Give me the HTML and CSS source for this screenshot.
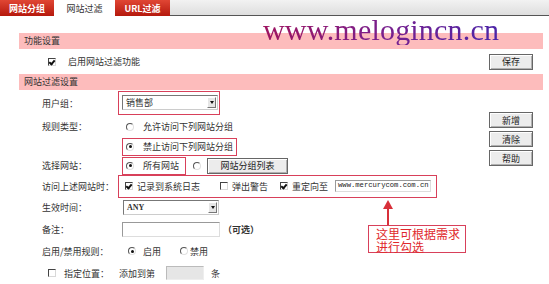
FILE: index.html
```html
<!DOCTYPE html>
<html lang="zh-CN">
<head>
  <meta charset="UTF-8">
  <title>网站过滤</title>
  <link rel="stylesheet" href="styles.css">
</head>
<body>

  <div class="tabs">
    <span class="tab">网站分组</span>
    <span class="tab active">网站过滤</span>
    <span class="tab">URL过滤</span>
    <span class="tab-fill"></span>
  </div>

  <div class="watermark">www.melogincn.cn</div>

  <div class="page">
    <div class="bar">功能设置</div>
    <div class="enable-row">
      <span class="cb checked"></span>
      <span class="enable-label">启用网站过滤功能</span>
      <button class="btn save">保存</button>
    </div>

    <div class="bar">网站过滤设置</div>
    <div class="section">
      <div class="form">
        <span class="lbl">用户组：</span>
        <div><span class="hl hl-select"><span class="select">销售部<i class="drop"></i></span></span></div>

        <span class="lbl">规则类型：</span>
        <div><span class="opt"><span class="rd"></span>允许访问下列网站分组</span></div>

        <span class="lbl"></span>
        <div><span class="opt hl"><span class="rd on"></span>禁止访问下列网站分组</span></div>

        <span class="lbl">选择网站：</span>
        <div class="line">
          <span class="opt hl opt-all"><span class="rd on"></span>所有网站</span>
          <span class="rd rd-list"></span>
          <button class="btn btn-list">网站分组列表</button>
        </div>

        <span class="lbl">访问上述网站时：</span>
        <div><span class="hl hl-wide">
          <span class="cb checked"></span><span class="cb-text">记录到系统日志</span>
          <span class="cb cb-warn"></span><span class="cb-text">弹出警告</span>
          <span class="cb checked cb-redir"></span><span class="cb-text">重定向至</span>
          <span class="input url">www.mercurycom.com.cn</span>
        </span></div>

        <span class="lbl">生效时间：</span>
        <div><span class="select select-time"><b>ANY</b><i class="drop"></i></span></div>

        <span class="lbl">备注：</span>
        <div class="line"><span class="input note"></span><span class="optional">（可选）</span></div>

        <span class="lbl">启用/禁用规则：</span>
        <div class="line state">
          <span class="rd on"></span><span class="on-text">启用</span>
          <span class="rd rd-off"></span><span>禁用</span>
        </div>

        <div class="line position">
          <span class="cb"></span>
          <span class="pos-label">指定位置：</span>
          <span>添加到第</span>
          <span class="input pos-num"></span>
          <span class="pos-unit">条</span>
        </div>
      </div>

      <div class="side">
        <button class="btn">新增</button>
        <button class="btn">清除</button>
        <button class="btn">帮助</button>
      </div>
    </div>
  </div>

  <div class="note-arrow"></div>
  <div class="note-box">这里可根据需求<br>进行勾选</div>

</body>
</html>
```

FILE: styles.css
```css
body {
  margin: 0;
  background: #fff;
  color: #333;
  font-family: "Noto Sans CJK SC", "Liberation Sans", sans-serif;
  font-size: 9px;
  line-height: 1;
  position: relative;
  width: 549px;
  height: 284px;
  overflow: hidden;
}

/* tabs */
.tabs {
  display: flex;
  height: 16px;
}
.tab {
  width: 54px;
  margin-right: 2px;
  display: flex;
  align-items: center;
  justify-content: center;
  background: linear-gradient(#e04634, #b5190d);
  color: #fff;
  font-weight: bold;
}
.tab.active {
  width: 57px;
  background: #fff;
  color: #333;
  font-weight: normal;
}
.tab:nth-child(3) {
  width: 55px;
  margin-right: 0;
}
.tab-fill {
  flex: 1;
  background: linear-gradient(#f2f2f2, #dedede);
  border-bottom: 1px solid #555;
  box-sizing: border-box;
}

.watermark {
  position: absolute;
  left: 263px;
  top: 15px;
  font-family: "Liberation Serif", serif;
  font-size: 30px;
  line-height: 30px;
  letter-spacing: 0.2px;
  background: linear-gradient(90deg, #9e1460, #7a1f8c 50%, #4c25a8);
  -webkit-background-clip: text;
  background-clip: text;
  color: transparent;
  z-index: 2;
}

.page {
  padding: 17px 6px 0 19px;
}
.bar {
  height: 16px;
  line-height: 16px;
  padding-left: 5px;
  background: #fdbcbc;
  color: #333;
}

.enable-row {
  height: 25px;
  display: flex;
  align-items: center;
  padding-left: 29px;
}
.enable-label {
  margin-left: 12px;
}
.save {
  margin-left: auto;
  margin-right: 10px;
}

/* controls */
.btn {
  width: 44px;
  height: 16px;
  padding: 0;
  background: #ececec;
  border: 1px solid #666;
  box-shadow: inset 1px 1px #fff, inset -1px -1px #b0b0b0;
  font-family: inherit;
  font-size: 9px;
  color: #222;
}
.cb {
  display: inline-block;
  width: 8px;
  height: 8px;
  box-sizing: border-box;
  border: 1px solid;
  border-color: #444 #d8d8d8 #d8d8d8 #444;
  background: #fff;
  position: relative;
  flex: none;
}
.cb.checked::after {
  content: "";
  position: absolute;
  left: 1px;
  top: 0;
  width: 2px;
  height: 4px;
  border: solid #111;
  border-width: 0 2px 2px 0;
  transform: rotate(40deg);
}
.rd {
  display: inline-block;
  width: 8px;
  height: 8px;
  box-sizing: border-box;
  border-radius: 50%;
  border: 1px solid;
  border-color: #555 #e0e0e0 #e0e0e0 #555;
  position: relative;
  flex: none;
}
.rd.on::after {
  content: "";
  position: absolute;
  left: 1.5px;
  top: 1.5px;
  width: 3px;
  height: 3px;
  border-radius: 50%;
  background: #111;
}
.select {
  display: inline-flex;
  align-items: center;
  width: 96px;
  height: 15px;
  box-sizing: border-box;
  border: 1px solid;
  border-color: #777 #ccc #ccc #777;
  padding-left: 3px;
  background: #fff;
  position: relative;
}
.select b {
  font-family: "Liberation Serif", serif;
  font-size: 8px;
}
.drop {
  position: absolute;
  right: 1px;
  top: 1px;
  width: 9px;
  height: 11px;
  box-sizing: border-box;
  background: #e6e6e6;
  border: 1px solid;
  border-color: #fff #777 #777 #fff;
}
.drop::after {
  content: "";
  position: absolute;
  left: 1.5px;
  top: 3px;
  border: 2.5px solid transparent;
  border-top: 3px solid #111;
  border-bottom: 0;
}
.input {
  display: inline-flex;
  align-items: center;
  box-sizing: border-box;
  height: 15px;
  border: 1px solid;
  border-color: #999 #ddd #ddd #999;
  background: #fff;
}

/* highlight annotations */
.hl {
  outline: 1px solid #d8405a;
}

/* filter section */
.section {
  display: flex;
}
.form {
  flex: 1;
  display: grid;
  grid-template-columns: 80px 1fr;
  grid-template-rows: 26px 21px 19px 19px 22px 21px 22px 22px 22px;
  align-items: center;
  padding-left: 23px;
}
.line {
  display: flex;
  align-items: center;
}
.hl-select {
  display: inline-flex;
  margin-left: -3px;
  padding: 3px 1px 4px 3px;
}
.opt {
  display: inline-flex;
  align-items: center;
  gap: 9px;
  height: 16px;
  margin-left: 1px;
  padding: 0 3px;
}
.opt-all {
  padding-right: 6px;
}
.rd-list {
  margin-left: 8px;
}
.btn-list {
  width: 81px;
  margin-left: 6px;
}
.hl-wide {
  display: inline-flex;
  align-items: center;
  height: 21px;
  box-sizing: border-box;
  margin-left: -3px;
  padding: 0 5px 0 6px;
}
.cb-text {
  margin-left: 4px;
}
.cb-warn {
  margin-left: 20px;
}
.cb-redir {
  margin-left: 12px;
}
.url {
  width: 96px;
  margin-left: 7px;
  height: 12px;
  padding-left: 2px;
  font-family: "Liberation Mono", monospace;
  font-size: 7.2px;
  color: #222;
}
.select-time {
  margin-left: 1px;
}
.note {
  width: 98px;
}
.optional {
  margin-left: 3px;
  font-weight: bold;
}
.state .rd:first-child {
  margin-left: 6px;
}
.on-text {
  margin-left: 7px;
}
.rd-off {
  margin: 0 2px 0 19px;
}
.position {
  grid-column: 1 / -1;
  margin-left: 6px;
}
.pos-label {
  margin: 0 10px 0 8px;
}
.pos-num {
  width: 38px;
  height: 14px;
  margin: 0 7px 0 11px;
  background: #e6e6e6;
  border-color: #bbb #eee #eee #bbb;
}

.side {
  width: 44px;
  margin-right: 10px;
  padding-top: 22px;
  display: flex;
  flex-direction: column;
  gap: 3px;
}

/* note callout */
.note-box {
  position: absolute;
  left: 368px;
  top: 225px;
  width: 98px;
  height: 28px;
  box-sizing: border-box;
  padding: 1px 0 0 7px;
  border: 1px solid #d8405a;
  background: #fff;
  color: #e0282c;
  font-size: 12px;
  line-height: 13px;
}
.note-arrow {
  position: absolute;
  left: 387px;
  top: 208px;
  width: 2px;
  height: 17px;
  background: #d8303a;
}
.note-arrow::before {
  content: "";
  position: absolute;
  left: -4px;
  top: -8px;
  border: 5px solid transparent;
  border-bottom: 9px solid #d8303a;
  border-top: 0;
}
```
